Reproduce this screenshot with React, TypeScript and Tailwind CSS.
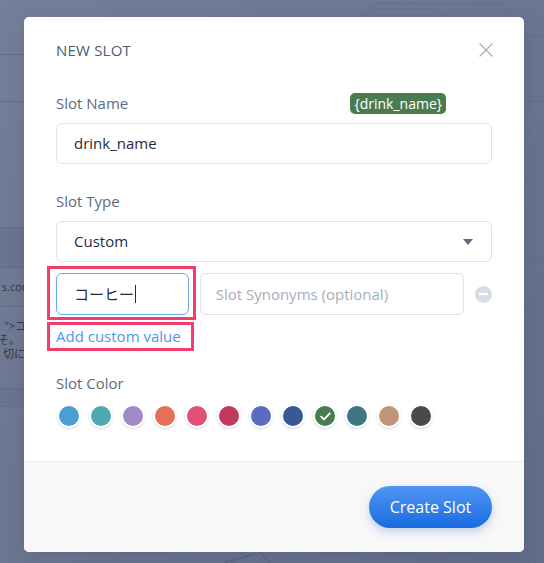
import React from "react";

const swatches = [
  "bg-[#4a9fd4]",
  "bg-[#50a9b1]",
  "bg-[#a38ac6]",
  "bg-[#e56f59]",
  "bg-[#e04f78]",
  "bg-[#c03a5a]",
  "bg-[#5c6bbf]",
  "bg-[#3a5898]",
  "bg-[#4a7c50]",
  "bg-[#3d7685]",
  "bg-[#c09478]",
  "bg-[#4a4a4a]",
];

function Background() {
  return (
    <div className="absolute inset-0 flex bg-gradient-to-br from-[#767f99] to-[#626d89]">
      <div className="w-[24px] flex flex-col overflow-hidden text-[11px] text-[#2f3849] whitespace-nowrap">
        <div className="h-[55px] border-b border-[#646d87]" />
        <div className="h-[47px] border-b border-[#646d87]" />
        <div className="h-[126px] border-b border-[#646d87]" />
        <div className="h-[40px] border-b border-[#646d87] bg-[#6b7490]" />
        <div className="h-[39px] border-b border-[#646d87] flex items-center justify-end leading-[14px]">
          <span className="-mr-[8px]">s.com</span>
        </div>
        <div className="h-[81px] flex flex-col pt-[12px] items-end">
          <div className="h-[14px] leading-[14px] overflow-hidden -mr-[2px]">"&gt;コ</div>
          <div className="h-[14px] leading-[14px] overflow-hidden mr-[4px]">そ。</div>
          <div className="h-[14px] leading-[14px] overflow-hidden -mr-[12px]">切にな</div>
        </div>
        <div className="h-[19px] bg-[#6a7390] border-y border-[#646d87]" />
      </div>
      <div className="flex-1 flex flex-col">
        <div className="h-[40px] flex justify-end pr-[12px] pt-[3px]">
          <div className="w-[150px] h-[60px] rounded-[16px] border border-[#66708a] flex pl-[2px] pt-[4px]">
            <div className="w-[80px] h-[50px] rounded-[14px] border border-[#68728c]" />
          </div>
        </div>
        <div className="flex-1" />
        <div className="h-[11px] flex justify-center">
          <svg width="80" height="11" viewBox="0 0 80 11" className="ml-[-20px]">
            <path d="M0 11 L30 2 M36 0 L46 11" stroke="#525d78" strokeWidth="1" fill="none" />
          </svg>
        </div>
      </div>
      <div className="w-[20px] flex flex-col">
        <div className="h-[36px] border-b border-[#646d87]" />
        <div className="h-[66px] border-b border-[#646d87]" />
        <div className="h-[80px] border-b border-[#646d87]" />
        <div className="h-[80px] border-b border-[#646d87]" />
        <div className="h-[48px] border-b border-[#646d87]" />
        <div className="h-[57px] border-b border-[#646d87]" />
        <div className="flex-1 flex">
          <div className="w-[11px]" />
          <div className="flex-1 flex flex-col justify-end">
            <div className="h-[23px] border-l border-[#5f6985]" />
          </div>
        </div>
      </div>
    </div>
  );
}

export default function App() {
  return (
    <div className="relative w-[544px] h-[563px] overflow-hidden [font-family:'Open_Sans','Noto_Sans_CJK_JP',sans-serif]">
      <Background />
      <div className="absolute left-[24px] top-[17px] w-[500px] h-[535px] bg-white rounded-[5px] flex flex-col overflow-hidden shadow-[0_4px_20px_rgba(30,40,60,0.15)]">
        <div className="flex-1 px-8 pt-[23px]">
          <div className="flex items-center justify-between h-[20px]">
            <span className="text-[15px] font-medium text-[#4c5b70] tracking-[0.2px]">NEW SLOT</span>
            <svg width="14" height="14" viewBox="0 0 14 14" className="mr-[-1px]">
              <path d="M1 1 L13 13 M13 1 L1 13" stroke="#a8b2c0" strokeWidth="1.4" strokeLinecap="round" />
            </svg>
          </div>

          <div className="mt-[33px] flex items-center justify-between h-[20px]">
            <span className="text-[15px] text-[#5b6a80]">Slot Name</span>
            <span className="mr-[46px] h-[21px] px-[4px] rounded-[5px] bg-[#4b7c4f] text-white text-[14px] leading-[21px]">
              {"{drink_name}"}
            </span>
          </div>
          <div className="mt-[10px] h-[41px] border border-[#dde2ea] rounded-[6px] px-[17px] flex items-center text-[15px] text-[#1f2d3d]">
            drink_name
          </div>

          <div className="mt-[27px] h-[20px] flex items-center text-[15px] text-[#5b6a80]">Slot Type</div>
          <div className="mt-[10px] h-[41px] border border-[#dde2ea] rounded-[6px] pl-[17px] pr-[18px] flex items-center justify-between text-[15px] text-[#1f2d3d]">
            <span>Custom</span>
            <svg width="10" height="6" viewBox="0 0 10 6">
              <path d="M0 0 L10 0 L5 6 Z" fill="#5d6a7e" />
            </svg>
          </div>

          <div className="mt-[11px] flex items-center">
            <div className="relative w-[133px] h-[42px]">
              <div className="h-full border border-[#6aa7ee] rounded-[6px] pl-[17px] flex items-center text-[15px] text-[#1f2d3d]">
                <span>コーヒー</span>
                <span className="ml-[1px] w-[1px] h-[18px] bg-[#1f2d3d]" />
              </div>
              <div className="absolute -left-[9px] -top-[7px] -right-[7px] -bottom-[5px] border-[3px] border-[#f23d6d] pointer-events-none" />
            </div>
            <div className="ml-[11px] w-[265px] h-[42px] border border-[#dde2ea] rounded-[6px] pl-[15px] flex items-center text-[15px] text-[#a6aebb]">
              Slot Synonyms (optional)
            </div>
            <div className="ml-[11px] w-[17px] h-[17px] rounded-full bg-[#d8dde5] flex items-center justify-center">
              <div className="w-[9px] h-[2px] bg-white" />
            </div>
          </div>

          <div className="mt-[11px] h-[20px] flex">
            <div className="relative flex items-center text-[15px] text-[#4f95ea]">
              Add custom value
              <div className="absolute -left-[9px] -top-[4px] -right-[13px] -bottom-[5px] border-[3px] border-[#f23d6d] pointer-events-none" />
            </div>
          </div>

          <div className="mt-[27px] h-[20px] flex items-center text-[15px] text-[#5b6a80]">Slot Color</div>
          <div className="mt-[11px] ml-[1px] flex gap-[8px]">
            {swatches.map((c, i) => (
              <div
                key={i}
                className={`w-[24px] h-[24px] rounded-full border-2 border-white shadow-[0_1px_2px_rgba(0,0,0,0.15)] flex items-center justify-center ${c}`}
              >
                {i === 8 && (
                  <svg width="11" height="9" viewBox="0 0 11 9">
                    <path d="M1.2 4.6 L4 7.3 L9.8 1.3" stroke="white" strokeWidth="1.8" fill="none" strokeLinecap="round" strokeLinejoin="round" />
                  </svg>
                )}
              </div>
            ))}
          </div>
        </div>

        <div className="h-[91px] border-t border-[#ebedf0] bg-[#f8f8f9] flex justify-end items-start pt-[24px] px-8">
          <div className="w-[123px] h-[42px] rounded-full bg-gradient-to-b from-[#4f95f3] to-[#166be0] text-white text-[16px] flex items-center justify-center shadow-[0_4px_10px_rgba(40,90,180,0.25)]">
            Create Slot
          </div>
        </div>
      </div>
    </div>
  );
}
